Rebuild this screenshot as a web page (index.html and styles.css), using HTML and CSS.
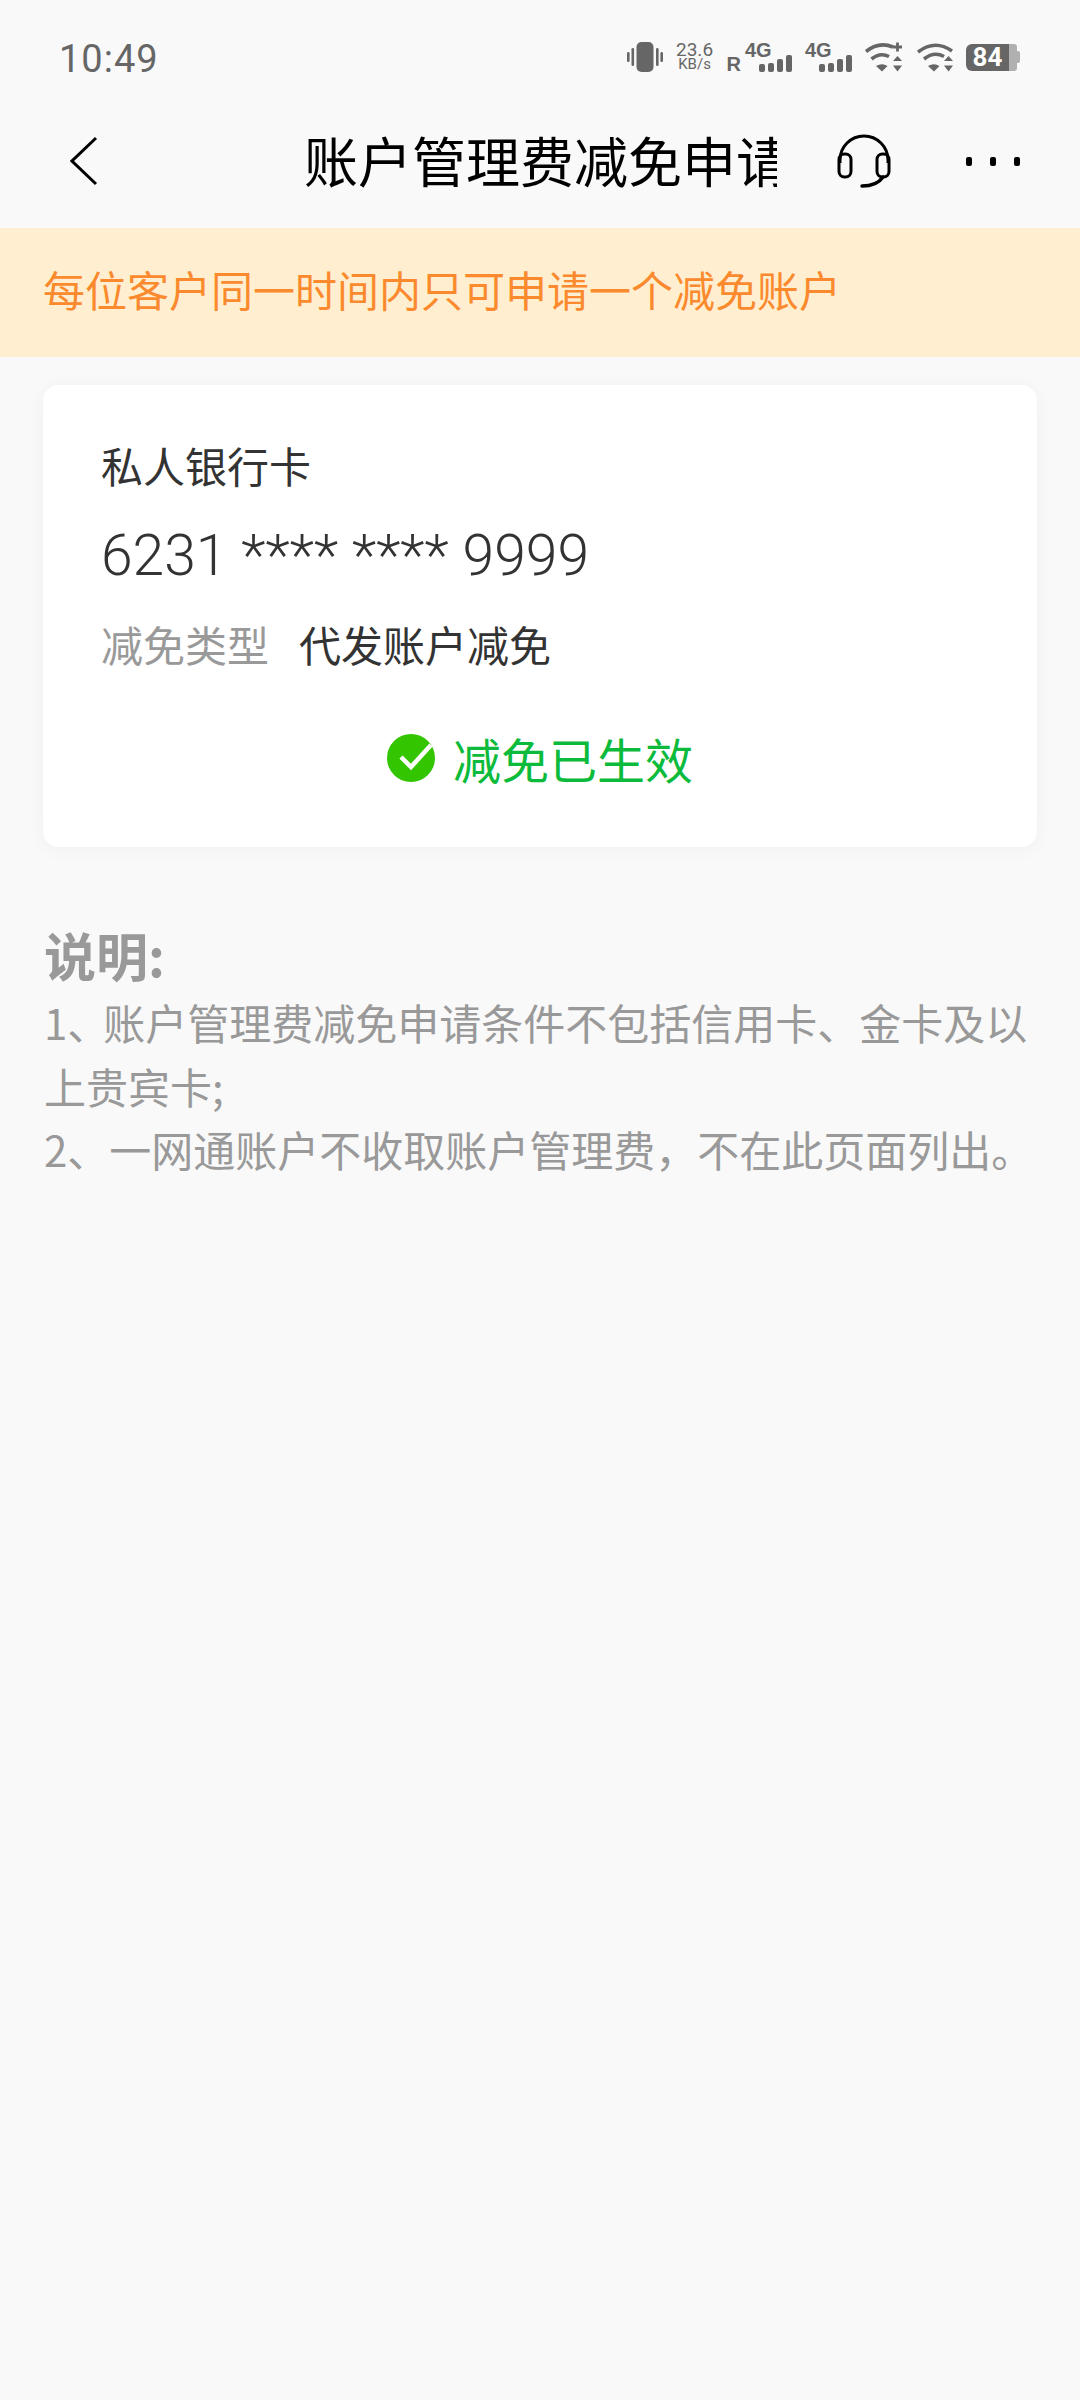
FILE: index.html
```html
<!DOCTYPE html>
<html lang="zh-CN">
<head>
<meta charset="utf-8">
<title>账户管理费减免申请</title>
<link rel="stylesheet" href="styles.css">
</head>
<body>
<div class="status">
  <span class="time">10:49</span>
  <div class="status-icons">
    <svg class="ic-vibrate" width="36" height="30" viewBox="0 0 36 30"><rect x="9.500" y="0" width="17" height="30" rx="5" fill="#666"/><rect x="4.500" y="6" width="2.600" height="18" rx="1.300" fill="#666"/><rect x="29" y="6" width="2.600" height="18" rx="1.300" fill="#666"/><rect x="0" y="10" width="2.600" height="10" rx="1.300" fill="#666"/><rect x="33.400" y="10" width="2.600" height="10" rx="1.300" fill="#666"/></svg>
    <div class="speed"><span>23.6</span><span class="unit">KB/s</span></div>
    <div class="sim">
      <span class="roam">R</span>
      <div class="sim-stack"><span class="net">4G</span><div class="bars"><i class="b1"></i><i class="b2"></i><i class="b3"></i><i class="b4"></i></div></div>
    </div>
    <div class="sim">
      <div class="sim-stack"><span class="net">4G</span><div class="bars"><i class="b1"></i><i class="b2"></i><i class="b3"></i><i class="b4"></i></div></div>
    </div>
    <svg class="ic-wifi" width="37" height="30" viewBox="0 0 37 30"><path d="M1 9.500 Q14 -1 28 5" fill="none" stroke="#666" stroke-width="3.600"/><path d="M6.500 17 Q15 10 24 14.500" fill="none" stroke="#666" stroke-width="3.600"/><path d="M11 24 L17 29.500 L22.500 24 Q17 20.500 11 24Z" fill="#666"/><path d="M28 5h9M32.500 0.500v9" stroke="#666" stroke-width="2.800" fill="none"/><path d="M32.500 14l4.500 5h-9zM32.500 29.500l4.500-6h-9z" fill="#666"/></svg>
    <svg class="ic-wifi wifi-two" width="36" height="30" viewBox="0 0 36 30"><path d="M1 10 Q18 -3 35 9" fill="none" stroke="#666" stroke-width="3.600"/><path d="M7 17 Q17 9 27 14.500" fill="none" stroke="#666" stroke-width="3.600"/><path d="M11 24 L17 29.500 L22.500 24 Q17 20.500 11 24Z" fill="#666"/><path d="M31.500 14l4.500 5h-9zM31.500 29.500l4.500-6h-9z" fill="#666"/></svg>
    <div class="battery"><span class="batt-level">84</span><span class="batt-rest"></span><span class="batt-tip"></span></div>
  </div>
</div>

<header class="nav">
  <svg class="back" width="28" height="50" viewBox="0 0 28 50"><path d="M26 2 L2 25 L26 48" fill="none" stroke="#000" stroke-width="3"/></svg>
  <div class="title-box"><h1 class="title">账户管理费减免申请</h1></div>
  <svg class="headset" width="56" height="56" viewBox="0 0 56 56"><path d="M4 30 V27 A24 24 0 0 1 52 27 V30" fill="none" stroke="#000" stroke-width="3"/><rect x="3" y="21" width="12" height="23" rx="5.500" fill="none" stroke="#000" stroke-width="3"/><rect x="41" y="21" width="12" height="23" rx="5.500" fill="none" stroke="#000" stroke-width="3"/><path d="M47 44 Q41 53 26 53" fill="none" stroke="#000" stroke-width="3.500" stroke-linecap="round"/></svg>
  <div class="dots"><i></i><i></i><i></i></div>
</header>

<div class="notice">每位客户同一时间内只可申请一个减免账户</div>

<section class="card">
  <div class="card-name">私人银行卡</div>
  <div class="card-no">6231 **** **** 9999</div>
  <div class="card-row"><span class="label">减免类型</span><span class="value">代发账户减免</span></div>
  <div class="state">
    <svg width="48" height="48" viewBox="0 0 48 48"><circle cx="24" cy="24" r="24" fill="#33c500"/><path d="M14 23 L24 33 L44 11" fill="none" stroke="#fff" stroke-width="4.500"/></svg>
    <span>减免已生效</span>
  </div>
</section>

<section class="notes">
  <h2>说明:</h2>
  <p>1<span class="enum">、</span>账户管理费减免申请条件不包括信用卡、金卡及以上贵宾卡;</p>
  <p>2、一网通账户不收取账户管理费，不在此页面列出。</p>
</section>
</body>
</html>
```

FILE: styles.css
```css
* { box-sizing: border-box; }
html, body { margin: 0; padding: 0; }
body {
  width: 1080px;
  height: 2400px;
  overflow: hidden;
  background: #f9f9f9;
  font-family: "Noto Sans CJK SC", "Noto Sans", sans-serif;
}
.status {
  height: 104px;
  padding: 10px 60px 0 59px;
  display: flex;
  align-items: center;
  justify-content: space-between;
}
.time { margin-top: 4px; font-family: Roboto, sans-serif; font-size: 38px; color: #666; letter-spacing: 1px; }
.status-icons { display: flex; align-items: center; gap: 13px; }
.speed { display: flex; flex-direction: column; align-items: center; width: 38px; color: #666; font-family: Roboto, sans-serif; font-size: 19px; line-height: 15px; }
.speed .unit { font-size: 15px; line-height: 15px; }
.sim { display: flex; align-items: flex-end; height: 30px; gap: 4px; }
.roam { font: 700 20px/15px "Liberation Sans", sans-serif; color: #666; }
.sim-stack { display: block; height: 30px; position: relative; width: 47px; }
.net { display: block; font: 700 20px/16px "Liberation Sans", sans-serif; color: #666; }
.bars { position: absolute; right: 0; bottom: 0; display: flex; align-items: flex-end; gap: 3px; }
.bars i { display: block; width: 6px; background: #666; border-radius: 2px; }
.bars .b1 { height: 8px; }
.bars .b2 { height: 9px; }
.bars .b3 { height: 13px; }
.bars .b4 { height: 17px; }
.wifi-two { margin-left: 2px; }
.battery { display: flex; align-items: center; height: 27px; }
.batt-level { width: 43px; height: 27px; background: #666; color: #fff; border-radius: 6px 0 0 6px; font: 700 26px/27px Roboto, sans-serif; text-align: center; }
.batt-rest { width: 8px; height: 27px; background: #b0b0b0; border-radius: 0 3px 3px 0; }
.batt-tip { width: 3px; height: 12px; background: #b0b0b0; border-radius: 0 2px 2px 0; }
.nav {
  height: 114px;
  margin-bottom: 10px;
  display: flex;
  align-items: center;
  padding-left: 70px;
}
.back { flex: none; }
.title-box { width: 473px; margin-left: 206px; overflow: hidden; white-space: nowrap; flex: none; padding-bottom: 2px; }
.title { margin: 0; font-size: 54px; font-weight: 400; color: #000; line-height: 64px; }
.headset { margin-left: 59px; flex: none; }
.dots { display: flex; gap: 18px; margin-left: 74px; }
.dots i { display: block; width: 6px; height: 9px; border-radius: 2px; background: #000; }
.notice {
  height: 129px;
  background: #ffefd0;
  color: #fb8a2e;
  font-size: 42px;
  line-height: 122px;
  padding-left: 43px;
}
.card {
  margin: 28px 43px 0;
  height: 462px;
  background: #fff;
  border-radius: 16px;
  padding: 52px 58px 0;
  box-shadow: 0 2px 20px rgba(0, 0, 0, 0.04);
}
.card-name { font-size: 42px; line-height: 56px; color: #333; }
.card-no { margin-top: 29px; font-size: 57px; line-height: 68px; color: #333; font-family: Roboto, sans-serif; font-weight: 300; }
.card-row { margin-top: 26px; font-size: 42px; line-height: 56px; display: flex; gap: 30px; }
.label { color: #999; }
.value { color: #333; }
.state { margin-top: 54px; display: flex; align-items: center; justify-content: center; gap: 18px; color: #0cbb3c; font-size: 48px; line-height: 64px; }
.notes { padding: 73px 44px 0; color: #999; font-size: 42px; line-height: 63.5px; }
.notes h2 { margin: 0; font-size: 52px; line-height: 70px; font-weight: 700; color: #999; }
.notes p { margin: 0; }
.enum { letter-spacing: -6px; }
```
